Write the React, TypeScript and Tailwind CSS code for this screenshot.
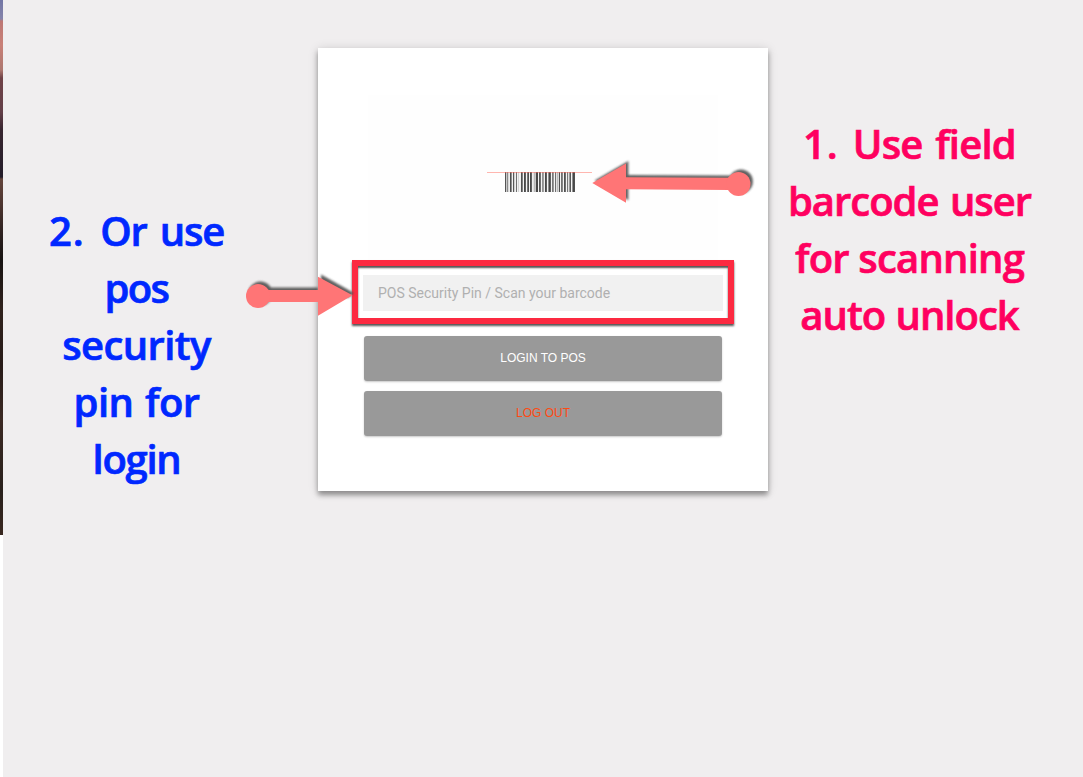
const barcodeColumns = [
  0x55, 0xc8, 0x8a, 0xd8, 0xee, 0x50, 0x90, 0xf2, 0x58, 0xd0, 0xf0, 0x70, 0xf2, 0xd5, 0xf5, 0xf0,
  0x50, 0x80, 0xf5, 0x48, 0x60, 0xf5, 0x78, 0x50, 0xf5, 0x48, 0x60, 0xee, 0xe0, 0xb8, 0xc8, 0x48,
  0x48, 0xf5, 0x58, 0x70, 0xf5, 0x90, 0xa0, 0xf0, 0x48, 0x60, 0xf5, 0x90, 0x48, 0x60, 0xf5, 0x78,
  0x98, 0xf5, 0x70, 0xe0, 0xb8, 0xd8, 0x50, 0xf5, 0x70, 0x88, 0xf5, 0x50, 0x70, 0xf5, 0x78, 0xe0,
  0x98, 0x58, 0xf5, 0x90, 0x48, 0x50,
];

function Barcode() {
  return (
    <svg width="106" height="22" viewBox="0 0 106 22" shapeRendering="crispEdges">
      {barcodeColumns.map((v, i) => (
        <rect key={i} x={18 + i} y="1" width="1" height="20" fill={`rgb(${v},${v},${v})`} />
      ))}
      <rect x="0" y="1" width="105" height="1" fill="#ff6e5f" opacity="0.5" />
    </svg>
  );
}

function RightArrow() {
  const shape = (
    <>
      <path d="M12.3 33 46 13.5V27.3L150 27.8V40L46 39.3V52.7Z" />
      <circle cx="158.5" cy="34" r="12" />
    </>
  );
  return (
    <svg className="absolute left-[580px] top-[150px]" width="190" height="70" viewBox="0 0 190 70">
      <defs>
        <filter id="soft" x="-10%" y="-30%" width="120%" height="160%">
          <feGaussianBlur stdDeviation="0.8" />
        </filter>
      </defs>
      <g fill="#505050" opacity="0.9" filter="url(#soft)" transform="translate(2.4 -2.4)">{shape}</g>
      <g fill="#ff7576">{shape}</g>
    </svg>
  );
}

function LeftArrow() {
  return (
    <svg className="absolute left-[230px] top-[250px]" width="140" height="90" viewBox="0 0 140 90">
      <defs>
        <filter id="softLeft" x="-10%" y="-30%" width="120%" height="160%">
          <feGaussianBlur stdDeviation="0.8" />
        </filter>
      </defs>
      <g fill="#505050" opacity="0.9" filter="url(#softLeft)">
        <path d="M36 37.5H88V48H36Z" />
        <circle cx="30.4" cy="43.6" r="12" />
        <path d="M91 24.5 124 43 118 48 91 34Z" />
      </g>
      <g fill="#ff7576">
        <path d="M36 40H88V26.7L122.5 45.3 88 65.7V52H36Z" />
        <circle cx="28" cy="46" r="12" />
      </g>
    </svg>
  );
}

export default function App() {
  return (
    <div className="relative flex h-[777px] w-[1083px] overflow-hidden bg-white">
      <div className="h-[535px] w-[3px] shrink-0 bg-[linear-gradient(to_bottom,#7376a5_0px,#8583aa_19px,#bd7774_21px,#c98077_45px,#ad776f_70px,#704247_78px,#633f48_112px,#37252f_130px,#241d2a_177px,#64453c_179px,#4c342f_205px,#2c201f_235px,#171312_260px,#30221d_310px,#281b18_365px,#3b2923_420px,#29201c_490px,#39271f_535px)]" />
      <div className="flex h-full flex-1 items-start bg-[#f0eeef]">
        <div className="flex w-[315px] shrink-0 flex-col pl-[33px] pt-[202px] text-center font-['Open_Sans',sans-serif] text-[40px] font-semibold leading-[57px] text-[#0028ff] [-webkit-text-stroke:0.7px_#0028ff]">
          <div className="flex w-[201px] flex-col items-center whitespace-nowrap">
            <span className="tracking-[-1.2px] [word-spacing:4px]"><span className="tracking-[1px]">2. </span>Or use</span>
            <span className="tracking-[-1.6px]">pos</span>
            <span className="tracking-[-0.6px]">security</span>
            <span className="tracking-[-0.6px] [word-spacing:2px]">pin for</span>
            <span className="tracking-[-1.3px]">login</span>
          </div>
        </div>
        <main className="mt-12 flex h-[443px] w-[450px] shrink-0 flex-col items-center bg-white shadow-[0_4px_5px_rgba(0,0,0,0.36),0_1px_10px_rgba(0,0,0,0.14)]">
          <div className="mt-[47px] flex h-[165px] w-[350px] justify-center bg-[#fefefe] pr-[6px] pt-[76px]">
            <Barcode />
          </div>
          <div className="box-border h-16 w-[382px] border-[6px] border-[#fc2a41] px-[5px] pt-[9px] shadow-[0_2px_2px_#555,inset_0_2px_2px_#555]">
            <input
              className="block h-9 w-[360px] bg-[#f1f1f1] px-[15px] font-[Roboto,sans-serif] text-[14px] outline-none placeholder:text-[#b0b0b0]"
              placeholder="POS Security Pin / Scan your barcode"
            />
          </div>
          <div className="mt-3 flex w-[358px] flex-col gap-2.5 font-['Liberation_Sans',sans-serif] text-[12px]">
            <button className="h-[45px] rounded-[3px] bg-[#999999] pb-0.5 text-white shadow-[0_1px_2px_rgba(0,0,0,0.22)]">LOGIN TO POS</button>
            <button className="h-[45px] rounded-[3px] bg-[#999999] pb-0.5 text-[#ff4a12] shadow-[0_1px_2px_rgba(0,0,0,0.22)]">LOG OUT</button>
          </div>
        </main>
        <div className="flex flex-1 flex-col items-center whitespace-nowrap pr-[32px] pt-[115px] font-['Open_Sans',sans-serif] text-[40px] font-semibold leading-[57px] text-[#ff005f] [-webkit-text-stroke:0.7px_#ff005f]">
          <div className="flex w-[283px] flex-col items-center">
            <span className="tracking-[-0.8px] [word-spacing:3px]"><span className="tracking-[0.8px]">1. </span>Use field</span>
            <span className="tracking-[-1px] [word-spacing:2px]">barcode user</span>
            <span className="tracking-[-0.8px]">for scanning</span>
            <span className="tracking-[-1px] [word-spacing:1px]">auto unlock</span>
          </div>
        </div>
      </div>
      <RightArrow />
      <LeftArrow />
    </div>
  );
}
